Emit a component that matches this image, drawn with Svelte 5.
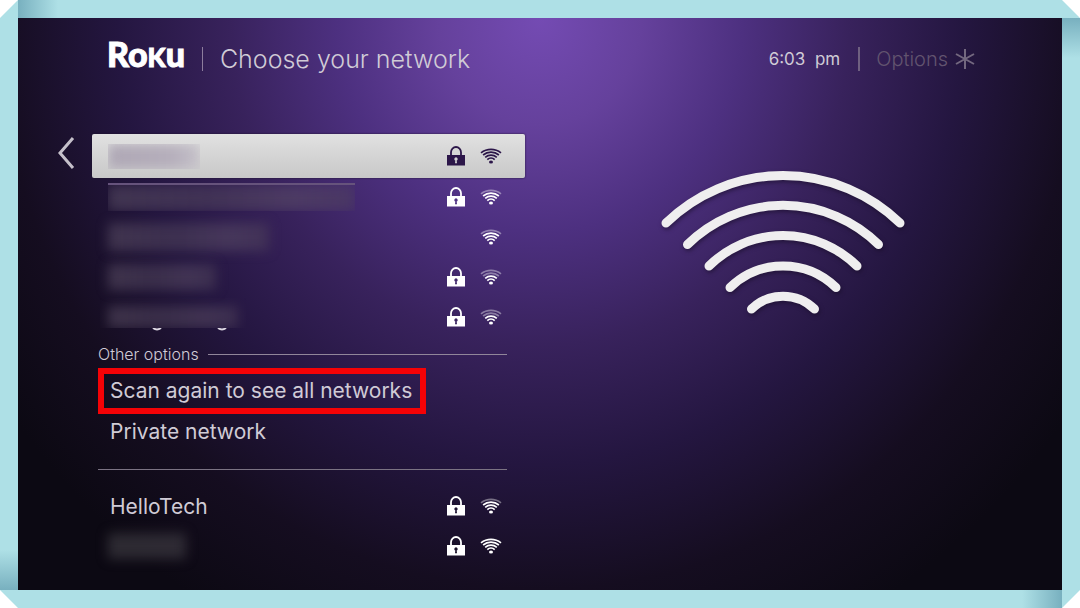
<!-- Network picker screen with its folded paper frame -->
<script lang="ts">
  interface Network {
    name?: string;
    mask?: number;
    height?: number;
    edge?: string;
    locked: boolean;
    faint: number;
  }

  const nearby: Network[] = [
    { mask: 92, height: 25, edge: 'light', locked: true, faint: 0 },
    { mask: 247, height: 26, edge: 'top', locked: true, faint: 1 },
    { mask: 161, height: 28, locked: false, faint: 1 },
    { mask: 108, height: 26, locked: true, faint: 2 },
    { mask: 130, height: 22, edge: 'bottom', locked: true, faint: 2 },
  ];

  const saved: Network[] = [
    { name: 'HelloTech', locked: true, faint: 1 },
    { mask: 78, height: 26, edge: 'dark', locked: true, faint: 0 },
  ];

  // outermost first, so the first few can be dimmed
  const smallArcs = [
    'M1 4.8A16.4 16.4 0 0 1 21 4.8',
    'M3.1 7A12.6 12.6 0 0 1 18.9 7',
    'M5.2 9.3A9 9 0 0 1 16.8 9.3',
    'M7.3 11.6A5.6 5.6 0 0 1 14.7 11.6',
  ];

  const bigArcs = [
    'M9 57A168 168 0 0 1 243 57',
    'M30.5 78.5A136 136 0 0 1 221.5 78.5',
    'M52 100A105 105 0 0 1 200 100',
    'M73 121.5A76 76 0 0 1 179 121.5',
    'M94.5 143A45 45 0 0 1 157.5 143',
  ];

  let selected = $state(0);
</script>

{#snippet row(net: Network, active: boolean, onclick?: () => void)}
  <li>
    <button class="row" class:active {onclick} aria-label={net.name ?? 'Hidden network'}>
      {#if net.name}
        <span class="label">{net.name}</span>
      {:else}
        <span class="mask {net.edge ?? ''}" style="width: {net.mask}px; height: {net.height}px">
          <span class="smear"></span>
          {#if net.edge === 'bottom'}
            <svg class="tails" viewBox="0 0 130 4" aria-hidden="true">
              <path d="M45 0Q49 3 53 0M110 0Q114 3 118 0" />
            </svg>
          {/if}
        </span>
      {/if}
      <span class="icons">
        {#if net.locked}
          <svg class="lock" viewBox="0 0 18 20" aria-hidden="true">
            <path d="M4 9V6.2A5 5.2 0 0 1 14 6.2V9" fill="none" stroke="currentColor" stroke-width="1.8" />
            <path
              d="M0 9H18V19.5H0ZM9 11.2A1.8 1.8 0 0 0 8.3 14.6L8 17.2H10L9.7 14.6A1.8 1.8 0 0 0 9 11.2Z"
              fill="currentColor"
              fill-rule="evenodd"
            />
          </svg>
        {/if}
        <svg class="signal" viewBox="0 0 22 16" aria-hidden="true">
          {#each smallArcs as d, i}
            <path {d} opacity={i < net.faint ? 0.4 : 1} />
          {/each}
          <ellipse cx="11" cy="14" rx="2" ry="1.5" />
        </svg>
      </span>
    </button>
  </li>
{/snippet}

<div class="frame">
  <main class="screen">
    <header>
      <span class="logo">Ro<span class="small-cap">K</span>u</span>
      <h1>Choose your network</h1>
      <time>6:03&nbsp; pm</time>
      <button class="options">
        Options
        <svg viewBox="0 0 20 20" aria-hidden="true">
          <path d="M10 0V20M1 5L19 15M19 5L1 15" />
        </svg>
      </button>
    </header>

    <div class="body">
      <div class="picker">
        <button class="back" aria-label="Back">
          <svg viewBox="0 0 18 34" aria-hidden="true"><path d="M16 2L3 17L16 32" /></svg>
        </button>
        <div class="lists">
          <ul class="nearby">
            {#each nearby as net, i}
              {@render row(net, i === selected, () => (selected = i))}
            {/each}
          </ul>
          <section>
            <h2>Other options</h2>
            <button class="choice marked">Scan again to see all networks</button>
            <button class="choice">Private network</button>
          </section>
          <ul>
            {#each saved as net}
              {@render row(net, false)}
            {/each}
          </ul>
        </div>
      </div>

      <div class="art">
        <svg viewBox="0 0 252 152" aria-hidden="true">
          {#each bigArcs as d}
            <path {d} />
          {/each}
        </svg>
      </div>
    </div>
  </main>
</div>

<style>
:global(body) {
  margin: 0;
  background: #fff;
}
.frame {
  box-sizing: border-box;
  min-height: 100vh;
  padding: 18px;
  display: flex;
  background:
    linear-gradient(90deg, #78b0bf, #aee0e6) 18px 0 / 40px 18px no-repeat,
    linear-gradient(180deg, #78b0bf, #aee0e6) 100% 18px / 18px 40px no-repeat,
    linear-gradient(270deg, #78b0bf, #aee0e6) calc(100% - 18px) 100% / 40px 18px no-repeat,
    linear-gradient(0deg, #78b0bf, #aee0e6) 0 calc(100% - 18px) / 18px 40px no-repeat,
    #aee0e6;
  clip-path: polygon(18px 0, calc(100% - 18px) 0, 100% 18px, 100% calc(100% - 18px), calc(100% - 18px) 100%, 18px 100%, 0 calc(100% - 18px), 0 18px);
}
.screen {
  flex: 1;
  min-width: 0;
  font-family: Inter, "Open Sans", sans-serif;
  color: #d0cbd6;
  background: radial-gradient(ellipse 54% 104% at 50% 0, #744bb3 0, #65419c 18%, #4d3080 36%, #38225c 55%, #241640 75%, #150d20 96%, #0c0913 115%) #0c0913;
}
button {
  font: inherit;
  color: inherit;
  background: none;
  border: 0;
  padding: 0;
  cursor: pointer;
}
svg {
  display: block;
}
header {
  display: flex;
  align-items: center;
  height: 40px;
  padding: 21px 87px 0 89px;
}
.logo {
  padding-bottom: 8px;
  font-family: Lato, sans-serif;
  font-weight: 900;
  font-size: 34px;
  line-height: 34px;
  color: #fff;
  -webkit-text-stroke: 1px #fff;
}
.small-cap {
  font-size: 26px;
}
h1 {
  flex: 1;
  margin: 0 0 0 17px;
  padding-left: 17px;
  font-size: 25px;
  line-height: 24px;
  font-weight: 300;
  border-left: 1px solid #8d7d9d;
}
time {
  padding-right: 18px;
  font-size: 17px;
  line-height: 24px;
  border-right: 2px solid #6f6080;
}
.options {
  display: flex;
  align-items: center;
  gap: 7px;
  padding-left: 16px;
  font-size: 20px;
  line-height: 24px;
  font-weight: 300;
  color: #62546f;
}
.options svg {
  width: 20px;
  height: 20px;
  fill: none;
  stroke: #73687f;
  stroke-width: 2;
}
.body {
  display: grid;
  grid-template-columns: 507fr 537fr;
  padding-top: 55px;
}
.picker {
  display: flex;
  align-items: flex-start;
  padding-left: 39px;
}
.back {
  width: 35px;
  padding-top: 2px;
}
.back svg {
  width: 18px;
  height: 34px;
  fill: none;
  stroke: #c5c0ca;
  stroke-width: 3;
}
.lists {
  flex: 1;
}
ul {
  margin: 0;
  padding: 0;
  list-style: none;
}
.nearby {
  margin-bottom: 1px;
}
.row {
  display: flex;
  align-items: center;
  justify-content: space-between;
  box-sizing: border-box;
  width: 100%;
  height: 40px;
  padding: 0 23px 0 16px;
  font-size: 21px;
  color: #fff;
}
.row.active {
  height: 44px;
  margin-bottom: -1px;
  color: #2c1649;
  background: linear-gradient(#e1e1e1, #c8c8c8);
  border-radius: 2px;
  box-shadow: 0 0 2px #1b1029;
}
.label {
  padding-left: 2px;
  color: #d0cbd6;
}
.icons {
  display: flex;
  align-items: center;
  gap: 15px;
}
.lock {
  width: 18px;
  height: 20px;
}
.signal {
  width: 22px;
  height: 16px;
  fill: none;
  stroke: currentColor;
  stroke-width: 1.7;
}
.signal ellipse {
  fill: currentColor;
  stroke: none;
}
.mask {
  position: relative;
  display: block;
}
.smear {
  display: block;
  height: 100%;
  background: linear-gradient(90deg, #62566b80, #54485e80 40%, #5f526980 75%, #50435b80);
  filter: blur(6px);
}
.dark .smear {
  background: #46434a90;
}
.top,
.light {
  overflow: hidden;
}
.top {
  border-top: 2px solid #66537c;
}
.bottom .smear {
  clip-path: inset(-8px -8px 0 -8px);
}
.light .smear {
  background: linear-gradient(90deg, #aea7b5, #b5aebb 70%, #c5c1c9);
}
.tails {
  position: absolute;
  left: 0;
  top: 100%;
  width: 130px;
  height: 4px;
  fill: none;
  stroke: #ddd8e2;
  stroke-width: 2;
}
section {
  display: flex;
  flex-direction: column;
  align-items: flex-start;
  margin: 0 18px 16px 6px;
  padding-bottom: 19px;
  border-bottom: 1px solid #7b7383;
}
h2 {
  display: flex;
  align-items: center;
  gap: 9px;
  align-self: stretch;
  margin: 0;
  padding: 3px 0 1px;
  font-size: 16px;
  line-height: 26px;
  font-weight: 300;
}
h2::after {
  content: "";
  flex: 1;
  height: 1px;
  background: #91869a;
}
.choice {
  height: 36px;
  padding: 0 12px;
  font-size: 21px;
  line-height: 24px;
}
.choice.marked {
  height: 46px;
  padding: 0 8px 0 6px;
  border: 6px solid #f50206;
}
.art {
  padding: 32px 0 0 132px;
}
.art svg {
  width: 252px;
  max-width: 100%;
  fill: none;
  stroke: #efeeef;
  stroke-width: 9;
  stroke-linecap: round;
  filter: drop-shadow(1px 2px 2px #150b2490);
}
</style>
